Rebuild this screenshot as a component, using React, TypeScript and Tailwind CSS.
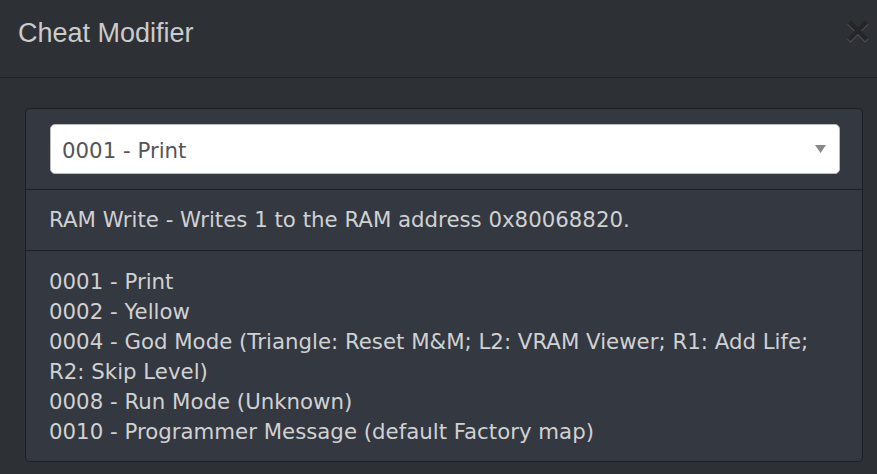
import React from 'react';

const cheats = [
    '0001 - Print',
    '0002 - Yellow',
    '0004 - God Mode (Triangle: Reset M&M; L2: VRAM Viewer; R1: Add Life; R2: Skip Level)',
    '0008 - Run Mode (Unknown)',
    '0010 - Programmer Message (default Factory map)',
];

export default function App() {
    return (
        <div className="w-[877px] h-[474px] overflow-hidden bg-[#2d3136] font-['DejaVu_Sans',sans-serif] text-[#d0d1d2]">
            {/* header */}
            <div className="flex items-start justify-between h-[78px] pl-[18px] pr-[7px] pt-[14px] border-b border-[#1e2125]">
                <h4 className="font-['Liberation_Sans',Arial,sans-serif] text-[27px] leading-[38px] text-[#cbcbcb]">
                    Cheat Modifier
                </h4>
                <button className="font-['Liberation_Sans',Arial,sans-serif] font-bold text-[42px] leading-none text-black opacity-20 [text-shadow:0_1px_0_#fff] -mt-[4px]">
                    ×
                </button>
            </div>

            {/* body */}
            <div className="pt-[30px] pl-[25px] pr-[14px]">
                <div className="bg-[#343841] border border-[#1c1f23] rounded-[5px]">
                    <div className="pt-[15px] pb-[15px] pl-[24px] pr-[22px] border-b border-[#1c1f23]">
                        <div className="relative h-[50px] bg-white rounded-[5px] border border-[#bbb] flex items-center pl-[11px] pt-[3px]">
                            <span className="text-[21.3px] text-[#555]">0001 - Print</span>
                            <svg className="absolute right-[13px] top-[20px]" width="11" height="8" viewBox="0 0 11 8">
                                <path d="M0 0 H11 L5.5 8 Z" fill="#888" />
                            </svg>
                        </div>
                    </div>
                    <div className="px-[23px] py-[15px] text-[21.3px] leading-[30px] border-b border-[#1c1f23]">
                        RAM Write - Writes 1 to the RAM address 0x80068820.
                    </div>
                    <div className="px-[23px] pt-[16px] pb-[14px] text-[21.3px] leading-[30px]">
                        {cheats.map((c) => (
                            <div key={c}>{c}</div>
                        ))}
                    </div>
                </div>
            </div>
        </div>
    );
}
